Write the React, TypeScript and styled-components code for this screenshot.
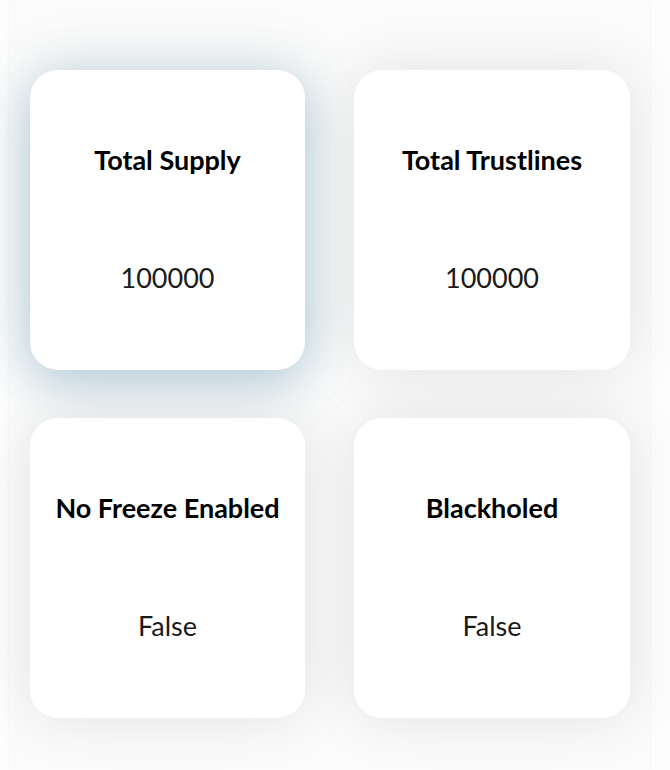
import React from "react";
import styled, { createGlobalStyle } from "styled-components";

const Global = createGlobalStyle`
  html, body { margin: 0; padding: 0; background: #fdfdfd; }
  body { font-family: Lato, "Open Sans", sans-serif; }
`;

const Page = styled.div`
  width: 670px;
  height: 770px;
  overflow: hidden;
  display: flex;
  padding-left: 9px;
  box-sizing: border-box;
`;

const Panel = styled.div`
  width: 641px;
  height: 770px;
  background: #fbfbfb;
  box-shadow: 0 0 3px rgba(0, 0, 0, 0.06);
  box-sizing: border-box;
  padding: 70px 20px 0 21px;
`;

const Grid = styled.div`
  display: grid;
  grid-template-columns: 275px 276px;
  column-gap: 49px;
  row-gap: 48px;
`;

const Card = styled.div<{ $active?: boolean }>`
  height: 300px;
  border-radius: 28px;
  background: #ffffff;
  display: flex;
  flex-direction: column;
  align-items: center;
  box-shadow: ${(p) =>
    p.$active
      ? "0 12px 50px rgba(70, 140, 170, 0.38), 0 -6px 60px rgba(110, 130, 140, 0.14)"
      : "0 0 60px rgba(0, 0, 0, 0.1)"};
`;

const Title = styled.div`
  margin-top: 73px;
  font-size: 27px;
  font-weight: 700;
  color: #000;
  line-height: 34px;
`;

const Value = styled.div`
  margin-top: 84px;
  font-size: 27px;
  font-weight: 400;
  color: #1a1a1a;
  line-height: 34px;
`;

const items = [
  { title: "Total Supply", value: "100000", active: true },
  { title: "Total Trustlines", value: "100000" },
  { title: "No Freeze Enabled", value: "False" },
  { title: "Blackholed", value: "False" },
];

export default function App() {
  return (
    <>
      <Global />
      <Page>
        <Panel>
          <Grid>
            {items.map((it) => (
              <Card key={it.title} $active={it.active}>
                <Title>{it.title}</Title>
                <Value>{it.value}</Value>
              </Card>
            ))}
          </Grid>
        </Panel>
      </Page>
    </>
  );
}
